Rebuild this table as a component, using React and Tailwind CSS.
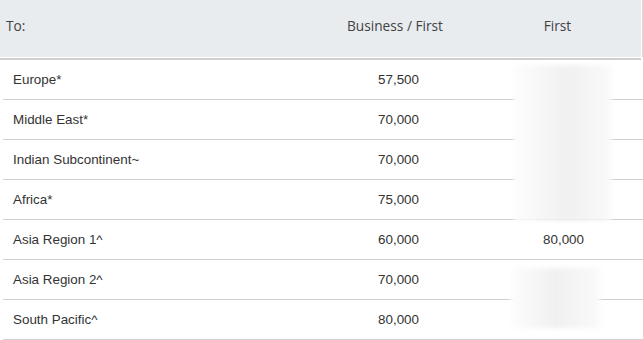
export default function App() {
  const rows = [
    ["Europe*", "57,500", ""],
    ["Middle East*", "70,000", ""],
    ["Indian Subcontinent~", "70,000", ""],
    ["Africa*", "75,000", ""],
    ["Asia Region 1^", "60,000", "80,000"],
    ["Asia Region 2^", "70,000", ""],
    ["South Pacific^", "80,000", ""],
  ];
  return (
    <div className="relative w-[643px] h-[340px] overflow-hidden bg-white">
      <div className="flex">
        <div className="w-[641px] h-[57px] pb-[4px] bg-[#e9ecee] grid grid-cols-[310px_170px_161px] items-center text-[13.7px] text-[#3f4245] font-['Open_Sans',sans-serif]">
          <div className="pl-[6px]">To:</div>
          <div className="text-center">Business / First</div>
          <div className="text-center pr-[6px]">First</div>
        </div>
        <div className="w-[1px]" />
        <div className="w-[1px] h-[57px] bg-[#d6d9db]" />
      </div>
      <div className="h-[1px]" />
      <div className="h-[2px] w-[641px] bg-[#cfcfcf]" />
      <div className="font-['Liberation_Sans',Arial,sans-serif] text-[13.4px] text-[#333]">
        {rows.map((r) => (
          <div key={r[0]} className="grid grid-cols-[310px_170px_161px] h-[40px] items-center w-[641px] ml-[3px] border-b border-[#d0d0d0]">
            <div className="pl-[10px] pt-[2px]">{r[0]}</div>
            <div className="text-center -ml-[3px] pl-[4px] pt-[2px]">{r[1]}</div>
            <div className="text-center pt-[2px]">{r[2]}</div>
          </div>
        ))}
      </div>
      <div className="absolute left-[514px] top-[65px] w-[97px] h-[156px] bg-[linear-gradient(to_right,#fdfdfd,#f0f0f0_55%,#fafafa)] blur-[2px]" />
      <div className="absolute left-[511px] top-[268px] w-[89px] h-[60px] bg-[linear-gradient(to_right,#fdfdfd,#f0f0f0_50%,#fafafa)] blur-[2px]" />
    </div>
  );
}
